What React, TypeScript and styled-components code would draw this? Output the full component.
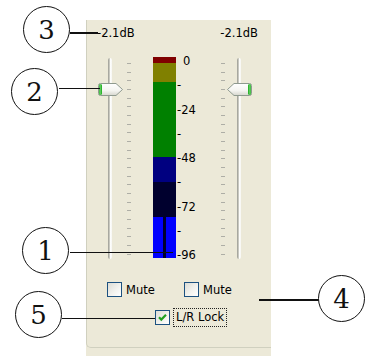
import * as React from 'react';
import styled, { createGlobalStyle } from 'styled-components';

const GlobalStyle = createGlobalStyle`
  html, body {
    margin: 0;
    padding: 0;
    background: #fff;
  }
  body {
    font-family: 'DejaVu Sans', 'Liberation Sans', sans-serif;
  }
`;

const Page = styled.div`
  position: relative;
  width: 367px;
  height: 356px;
  overflow: hidden;
  background: #fff;
`;

const Panel = styled.div`
  margin: 20px 0 0 86px;
  width: 185px;
  height: 336px;
  background: #ece9d8;
  font-size: 11.5px;
  color: #000;
`;

const Group = styled.div`
  height: 327px;
  border-left: 1px solid #d0d0bf;
  border-bottom: 1px solid #d0d0bf;
  border-bottom-left-radius: 5px;
`;

const Header = styled.div`
  display: flex;
  justify-content: space-between;
  height: 26px;
  line-height: 26px;
  padding: 0 13px 0 10px;
`;

const MainRow = styled.div`
  display: flex;
  align-items: flex-start;
  height: 203px;
  margin-top: 11px;
`;

const SliderColumn = styled.div<{ $ml: number }>`
  position: relative;
  display: flex;
  justify-content: center;
  width: 28px;
  height: 203px;
  margin-left: ${(p) => p.$ml}px;
`;

const Track = styled.div`
  width: 4px;
  height: 201px;
  margin-top: 1px;
  border-radius: 2px;
  background: linear-gradient(
    to right,
    #9c9c94 0,
    #b4b4ac 1px,
    #c8c8c0 1.5px,
    #ffffff 2px,
    #f6f6f2 4px
  );
`;

const Thumb = styled.svg<{ $top: number; $left: number }>`
  position: absolute;
  top: ${(p) => p.$top}px;
  left: ${(p) => p.$left}px;
`;

const TickColumn = styled.div<{ $ml: number }>`
  display: flex;
  flex-direction: column;
  justify-content: space-between;
  width: 4px;
  height: 192px;
  padding-top: 6px;
  margin-left: ${(p) => p.$ml}px;
`;

const Tick = styled.div`
  width: 4px;
  height: 1px;
  background: #aeaea6;
`;

const Meter = styled.div`
  display: flex;
  flex-direction: column;
  width: 23px;
  height: 201px;
  margin-left: 22px;
`;

const Segment = styled.div<{ $h: number; $c: string }>`
  height: ${(p) => p.$h}px;
  background: ${(p) => p.$c};
`;

const PeakSegment = styled.div`
  display: flex;
  height: 41px;
  background: #00002e;
`;

const PeakHalf = styled.div`
  flex: 1;
  background: #0000ff;
`;

const PeakGap = styled.div`
  width: 3px;
`;

const Scale = styled.div`
  display: flex;
  flex-direction: column;
  justify-content: space-between;
  width: 44px;
  height: 206px;
  margin: -2px 0 0 1px;
`;

const ScaleLabel = styled.div<{ $indent?: boolean }>`
  height: 12px;
  line-height: 12px;
  padding-left: ${(p) => (p.$indent ? 6 : 0)}px;
`;

const CheckRow = styled.div<{ $mt: number; $pl: number }>`
  display: flex;
  align-items: center;
  margin-top: ${(p) => p.$mt}px;
  padding-left: ${(p) => p.$pl}px;
`;

const CheckItem = styled.label<{ $w?: number }>`
  display: flex;
  align-items: center;
  gap: 4px;
  width: ${(p) => (p.$w ? `${p.$w}px` : 'auto')};
  height: 15px;
`;

const Box = styled.span`
  display: flex;
  align-items: center;
  justify-content: center;
  box-sizing: border-box;
  width: 15px;
  height: 15px;
  border: 1px solid #1c5180;
  background: linear-gradient(135deg, #dcdcd5 0%, #f2f2ee 55%, #ffffff 100%);
`;

const FocusLabel = styled.span`
  margin-left: -1px;
  padding: 0 2px;
  height: 17px;
  line-height: 17px;
  border: 1px dotted #222;
`;

const Circle = styled.div<{ $x: number; $y: number }>`
  position: absolute;
  left: ${(p) => p.$x}px;
  top: ${(p) => p.$y}px;
  width: 45px;
  height: 45px;
  border: 1.6px solid #111;
  border-radius: 50%;
  display: flex;
  align-items: center;
  justify-content: center;
  font-family: 'DejaVu Serif', 'Liberation Serif', serif;
  font-size: 26px;
  color: #111;
  background: #fff;
`;

const Leader = styled.div<{ $x: number; $y: number; $w: number }>`
  position: absolute;
  left: ${(p) => p.$x}px;
  top: ${(p) => p.$y}px;
  width: ${(p) => p.$w}px;
  height: 1.6px;
  background: #111;
`;

function SliderThumb({ flip, top, left }: { flip?: boolean; top: number; left: number }) {
  const id = flip ? 'thumbR' : 'thumbL';
  return (
    <Thumb $top={top} $left={left} width='26' height='13' viewBox='0 0 26 13'>
      <defs>
        <linearGradient id={id} x1='0' y1='0' x2='0' y2='1'>
          <stop offset='0' stopColor='#ffffff' />
          <stop offset='0.6' stopColor='#f4f4f0' />
          <stop offset='1' stopColor='#d6d6ce' />
        </linearGradient>
      </defs>
      <g transform={flip ? 'translate(26 0) scale(-1 1)' : undefined}>
        <path
          d='M2.5 0.5 H18 L24.5 6.5 L18 12.5 H2.5 Q0.5 12.5 0.5 10.5 V2.5 Q0.5 0.5 2.5 0.5 Z'
          fill={`url(#${id})`}
          stroke='#8f9a8f'
        />
        <rect x='1' y='1.2' width='3' height='10.6' rx='1' fill='#2db42d' />
        <rect x='1.6' y='2' width='1' height='9' fill='#7ad87a' />
      </g>
    </Thumb>
  );
}

const scale = ['0', '-', '-24', '-', '-48', '-', '-72', '-', '-96'];

function App() {
  const ticks = Array.from({ length: 23 });
  return (
    <Page>
      <GlobalStyle />
      <Panel>
        <Group>
          <Header>
            <span>-2.1dB</span>
            <span>-2.1dB</span>
          </Header>
          <MainRow>
            <SliderColumn $ml={9}>
              <Track />
              <SliderThumb top={26} left={2} />
            </SliderColumn>
            <TickColumn $ml={3}>
              {ticks.map((_, i) => (
                <Tick key={i} />
              ))}
            </TickColumn>
            <Meter>
              <Segment $h={6} $c='#800000' />
              <Segment $h={19} $c='#808000' />
              <Segment $h={75} $c='#008000' />
              <Segment $h={25} $c='#000080' />
              <Segment $h={35} $c='#00002e' />
              <PeakSegment>
                <PeakHalf />
                <PeakGap />
                <PeakHalf />
              </PeakSegment>
            </Meter>
            <Scale>
              {scale.map((s, i) => (
                <ScaleLabel key={i} $indent={s === '0'}>
                  {s}
                </ScaleLabel>
              ))}
            </Scale>
            <TickColumn $ml={0}>
              {ticks.map((_, i) => (
                <Tick key={i} />
              ))}
            </TickColumn>
            <SliderColumn $ml={0}>
              <Track />
              <SliderThumb flip top={26} left={1} />
            </SliderColumn>
          </MainRow>
          <CheckRow $mt={22} $pl={20}>
            <CheckItem $w={77}>
              <Box />
              <span>Mute</span>
            </CheckItem>
            <CheckItem>
              <Box />
              <span>Mute</span>
            </CheckItem>
          </CheckRow>
          <CheckRow $mt={13} $pl={68}>
            <CheckItem>
              <Box>
                <svg width='11' height='11' viewBox='0 0 11 11'>
                  <path
                    d='M2 5.2 L4.3 7.6 L9 2.8'
                    fill='none'
                    stroke='#21a121'
                    strokeWidth='2.2'
                  />
                </svg>
              </Box>
              <FocusLabel>L/R Lock</FocusLabel>
            </CheckItem>
          </CheckRow>
        </Group>
      </Panel>

      <Leader $x={70} $y={32} $w={28} />
      <Circle $x={23} $y={6}>3</Circle>
      <Leader $x={59} $y={87.5} $w={41} />
      <Circle $x={11} $y={68}>2</Circle>
      <Leader $x={70} $y={251.5} $w={103} />
      <Circle $x={22} $y={227}>1</Circle>
      <Leader $x={62} $y={317.5} $w={93} />
      <Circle $x={15} $y={291}>5</Circle>
      <Leader $x={259} $y={299} $w={60} />
      <Circle $x={318} $y={275}>4</Circle>
    </Page>
  );
}

export default App;
